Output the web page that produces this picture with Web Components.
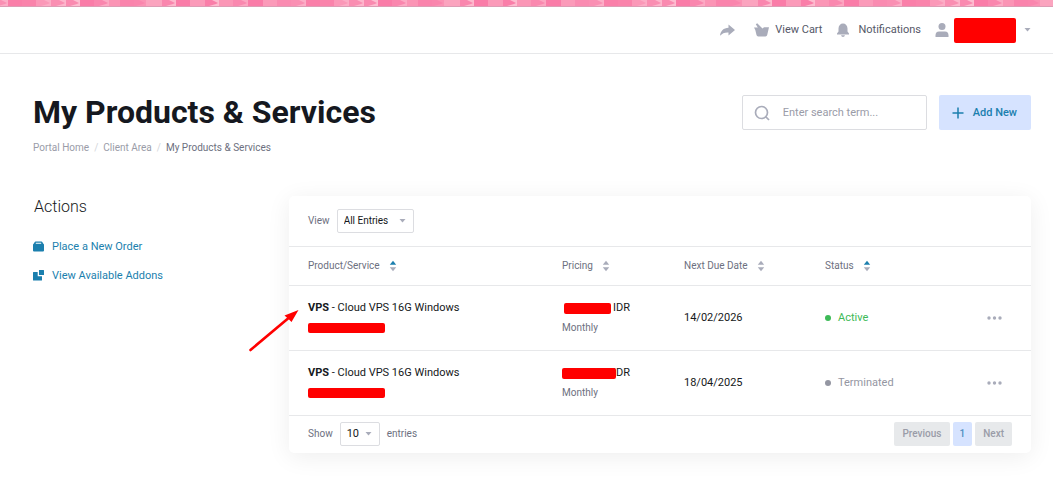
<!DOCTYPE html>
<html lang="en">
<head>
<meta charset="utf-8">
<title>My Products &amp; Services</title>
<style>
  body {
    margin: 0;
    background: #fff;
    color: #151820;
    font: 11px/20px Roboto, "Liberation Sans", sans-serif;
    --line: #e7e8ea;
    --muted: #6d7080;
    --icon: #a9acba;
    --accent: #1b7fae;
    --tint: #d6e3ff;
  }
</style>
</head>
<body>
<client-area></client-area>

<script>
class PatternStrip extends HTMLElement {
  constructor() {
    super();
    this.attachShadow({ mode: 'open' });
    this.render();
  }

  render() {
    // [start, shade, colour of the arrow tip at the right end]
    const tiles = [
      [0, '#fa7ca8'], [14, '#fa86ae', '#fcaac4'], [29, '#fb94b5'], [40, '#fa83ac'],
      [54, '#fa85ad', '#fb92b4'], [66, '#fba4bf'], [82, '#fa86ae', '#fdb9cd'],
      [96, '#fa7ca8'], [110, '#fb9ab9'], [125, '#fa7ea9', '#fdbccf'], [139, '#fb96b6'],
      [153, '#fa88af', '#fca6c1'], [168, '#fa7ca8'], [183, '#fb9ab9'], [197, '#fa8bb1'],
      [211, '#fa8fb3', '#fcaec7'], [226, '#fa7fa9'], [240, '#fa83ab'], [254, '#fb98b8', '#fcadc6'],
      [269, '#fa8eb2', '#fdb6cc'], [284, '#fa8ab0', '#fdbdd0'],
    ];
    const shapes = tiles.map(([x, shade, tip], i) => {
      const end = i + 1 < tiles.length ? tiles[i + 1][0] : 298;
      return `<path fill="${shade}" d="M${x} 0h${end - x}v6h-${end - x}z"/>`
        + (tip ? `<path fill="${tip}" d="M${end} 0v6h-10l7-2 2-1-6-3z"/>` : '');
    }).join('');
    this.shadowRoot.innerHTML = `
      <style>
        :host {
          display: block;
          height: 6px;
          background: #fa88ae;
          border-bottom: 1px solid #dc9db5;
        }
        svg {
          display: block;
          width: 100%;
          height: 6px;
        }
      </style>
      <svg aria-hidden="true">
        <defs><pattern id="tiles" x="80" width="298" height="6" patternUnits="userSpaceOnUse">${shapes}</pattern></defs>
        <rect width="100%" height="6" fill="url(#tiles)"/>
      </svg>
    `;
  }
}
customElements.define('pattern-strip', PatternStrip);

// Solid bar that hides private details
class RedactedBar extends HTMLElement {
  constructor() {
    super();
    this.attachShadow({ mode: 'open' });
    this.shadowRoot.innerHTML = `
      <style>
        :host {
          display: block;
          position: relative;
          flex: none;
          width: var(--bar-width, 77px);
          height: var(--bar-height, 10px);
          background: #f00;
          border-radius: 2px;
        }
      </style>
    `;
  }
}
customElements.define('redacted-bar', RedactedBar);

class SiteNav extends HTMLElement {
  constructor() {
    super();
    this.attachShadow({ mode: 'open' });
    this.render();
  }

  render() {
    this.shadowRoot.innerHTML = `
      <style>
        :host {
          display: flex;
          align-items: center;
          justify-content: flex-end;
          height: 46px;
          padding: 0 22px;
          border-bottom: 1px solid var(--line);
        }
        nav {
          display: flex;
          align-items: center;
          gap: 14px;
        }
        a, button {
          display: flex;
          align-items: center;
          gap: 6px;
          padding: 0;
          border: 0;
          background: none;
          color: #555868;
          font: inherit;
          text-decoration: none;
          cursor: pointer;
        }
        .share {
          margin-right: 5px;
        }
        .alerts {
          gap: 8px;
        }
        .account {
          gap: 5px;
          --bar-width: 62px;
          --bar-height: 25px;
        }
        .caret {
          margin-left: 3px;
        }
        svg {
          fill: var(--icon);
        }
      </style>
      <nav>
        <a class="share" href="#" aria-label="Share">
          <svg width="15" height="14" viewBox="0 0 15 14"><path d="M8.500 1.500L15 7l-6.500 5.500V9.500C5 9.200 2.200 10.300 0 12.800.5 8 3.500 5 8.500 4.800z"/></svg>
        </a>
        <a href="#">
          <svg width="15" height="14" viewBox="0 0 15 14"><path d="M0 4.500h3.800L1.800 1.200 3.200.3 8.500 5.500 10 4.200h5l-1.800 7.900q-.3 1.400-1.700 1.400H4.200q-1.400 0-1.700-1.400L1.300 7z"/></svg>
          View Cart
        </a>
        <a class="alerts" href="#">
          <svg width="14" height="14" viewBox="0 0 14 14"><path d="M1 11.500V10.500l1.500-2V5.500C2.500 2.500 4.500.5 7 .5s4.500 2 4.500 5v3l1.500 2v1zM5 12.300h4Q8.600 14 7 14T5 12.300z"/></svg>
          Notifications
        </a>
        <button class="account" type="button" aria-label="Account">
          <svg width="14" height="14" viewBox="0 0 14 14"><circle cx="7" cy="3.500" r="3.500"/><path d="M.5 14v-1.500Q.5 8.500 4 8.500h6q3.500 0 3.500 4V14z"/></svg>
          <redacted-bar></redacted-bar>
          <svg class="caret" width="7" height="4" viewBox="0 0 7 4"><path d="M.5 0h6l-3 3.500z"/></svg>
        </button>
      </nav>
    `;
  }
}
customElements.define('site-nav', SiteNav);

class PageHeader extends HTMLElement {
  constructor() {
    super();
    this.attachShadow({ mode: 'open' });
    this.render();
  }

  render() {
    this.shadowRoot.innerHTML = `
      <style>
        :host {
          display: flex;
          align-items: flex-start;
          justify-content: space-between;
          gap: 24px;
        }
        h1 {
          margin: 0;
          font-size: 32px;
          line-height: 34px;
          font-weight: 700;
        }
        ol {
          display: flex;
          margin: 9px 0 0;
          padding: 0;
          list-style: none;
          font-size: 10px;
          color: var(--muted);
        }
        li + li::before {
          content: "/";
          margin: 0 5px;
          color: #d3d5da;
        }
        li a {
          color: #9a9ca8;
          text-decoration: none;
        }
        .tools {
          display: flex;
          gap: 12px;
        }
        .search {
          display: flex;
          align-items: center;
          gap: 13px;
          box-sizing: border-box;
          width: 185px;
          height: 35px;
          padding: 0 11px;
          border: 1px solid #dcdde1;
          border-radius: 2px;
        }
        .search svg {
          flex: none;
          fill: none;
          stroke: var(--icon);
          stroke-width: 1.7;
        }
        input {
          min-width: 0;
          flex: 1;
          padding: 0;
          border: 0;
          outline: 0;
          background: none;
          font: inherit;
          color: inherit;
        }
        input::placeholder {
          color: #9a9ca8;
        }
        button {
          display: flex;
          align-items: center;
          gap: 8px;
          height: 35px;
          padding: 0 14px 0 13px;
          border: 0;
          border-radius: 2px;
          background: var(--tint);
          color: var(--accent);
          font: inherit;
          font-weight: 500;
        }
        button svg {
          stroke: currentColor;
          stroke-width: 1.5;
        }
      </style>
      <div>
        <h1>My Products &amp; Services</h1>
        <ol>
          <li><a href="#">Portal Home</a></li>
          <li><a href="#">Client Area</a></li>
          <li>My Products &amp; Services</li>
        </ol>
      </div>
      <div class="tools">
        <label class="search">
          <svg width="16" height="16" viewBox="0 0 16 16"><circle cx="7.500" cy="7.500" r="6"/><path d="M11.500 11.500l3.500 3.500"/></svg>
          <input type="search" placeholder="Enter search term..." aria-label="Search">
        </label>
        <button type="button">
          <svg width="13" height="12" viewBox="0 0 13 12"><path d="M6 .5v11M.5 6h11"/></svg>
          Add New
        </button>
      </div>
    `;
  }
}
customElements.define('page-header', PageHeader);

class SideActions extends HTMLElement {
  constructor() {
    super();
    this.attachShadow({ mode: 'open' });
    this.render();
  }

  render() {
    this.shadowRoot.innerHTML = `
      <style>
        :host {
          display: block;
          padding-top: 1px;
        }
        h2 {
          margin: 0 0 20px 1px;
          font-size: 16px;
          line-height: 20px;
          font-weight: 300;
        }
        ul {
          display: grid;
          gap: 9px;
          margin: 0;
          padding: 0;
          list-style: none;
        }
        a {
          display: flex;
          align-items: center;
          gap: 8px;
          color: var(--accent);
          text-decoration: none;
        }
        svg {
          fill: currentColor;
        }
      </style>
      <h2>Actions</h2>
      <ul>
        <li><a href="#">
          <svg width="11" height="12" viewBox="0 0 11 12"><path fill-rule="evenodd" d="M2.500.5h6q1 0 1.300 1.500L11 3.500V9.500q0 1-1 1H1q-1 0-1-1V3.500L1.200 2Q1.500.5 2.500.5zM2.800 1.800v1h5.400v-1z"/></svg>
          Place a New Order
        </a></li>
        <li><a href="#">
          <svg width="11" height="12" viewBox="0 0 11 12"><path d="M6 0h4.500q.5 0 .5.500V5H6zM.5 2H4.700v4.300H9V10q0 .5-.5.500H.5q-.5 0-.5-.5V2.500Q0 2 .5 2z"/></svg>
          View Available Addons
        </a></li>
      </ul>
    `;
  }
}
customElements.define('side-actions', SideActions);

class DropDown extends HTMLElement {
  constructor() {
    super();
    this.attachShadow({ mode: 'open' });
    this.render();
  }

  render() {
    const options = this.getAttribute('options').split(',');
    this.shadowRoot.innerHTML = `
      <style>
        :host {
          display: inline-block;
          font-size: 10px;
          color: var(--muted);
        }
        label {
          display: flex;
          align-items: center;
          gap: 7px;
        }
        .box {
          display: grid;
          align-items: center;
        }
        select, svg {
          grid-area: 1 / 1;
        }
        select {
          appearance: none;
          box-sizing: border-box;
          width: var(--select-width);
          height: 24px;
          padding: 0 6px;
          border: 1px solid #dcdde1;
          border-radius: 2px;
          background: #fff;
          font: inherit;
          font-size: var(--select-size, 10px);
          color: #151820;
        }
        svg {
          justify-self: end;
          margin-right: 8px;
          fill: var(--icon);
          pointer-events: none;
        }
      </style>
      <label>
        <span>${this.getAttribute('label')}</span>
        <span class="box">
          <select>${options.map((text) => `<option>${text}</option>`).join('')}</select>
          <svg width="7" height="4" viewBox="0 0 7 4"><path d="M.5 0h6l-3 3.500z"/></svg>
        </span>
        <slot></slot>
      </label>
    `;
  }
}
customElements.define('drop-down', DropDown);

class ProductTable extends HTMLElement {
  constructor() {
    super();
    this.attachShadow({ mode: 'open' });
    this.columns = [
      { label: 'Product/Service', sorted: true },
      { label: 'Pricing' },
      { label: 'Next Due Date' },
      { label: 'Status', sorted: true },
    ];
    this.rows = [
      { plan: 'Cloud VPS 16G Windows', due: '14/02/2026', status: 'Active', bar: '47px' },
      { plan: 'Cloud VPS 16G Windows', due: '18/04/2025', status: 'Terminated', bar: '54px' },
    ];
    this.render();
  }

  renderColumn(column) {
    return `
      <th scope="col"><button class="sort" type="button">${column.label}
        <svg width="8" height="12" viewBox="0 0 8 12">
          <path class="${column.sorted ? 'up' : ''}" d="M.8 4.700L4 .8l3.200 3.900z"/><path d="M.8 7.300h6.400L4 11.200z"/>
        </svg>
      </button></th>
    `;
  }

  renderRow(row) {
    return `
      <tr>
        <td><div><b>VPS</b> - ${row.plan}</div><div class="line"><redacted-bar></redacted-bar></div></td>
        <td>
          <div class="line">
            <span class="amount" style="--bar-width: ${row.bar}"><redacted-bar></redacted-bar></span>
            IDR
          </div>
          <div class="cycle">Monthly</div>
        </td>
        <td>${row.due}</td>
        <td><span class="status ${row.status.toLowerCase()}">${row.status}</span></td>
        <td><button class="menu" type="button" aria-label="More actions">
          <svg width="15" height="4" viewBox="0 0 15 4"><circle cx="2" cy="2" r="1.700"/><circle cx="7.500" cy="2" r="1.700"/><circle cx="13" cy="2" r="1.700"/></svg>
        </button></td>
      </tr>
    `;
  }

  render() {
    this.shadowRoot.innerHTML = `
      <style>
        :host {
          display: block;
          position: relative;
          border-radius: 5px;
          background: #fff;
          box-shadow: 0 4px 24px rgba(0, 0, 0, 0.07);
        }
        header {
          padding: 13px 19px;
          --select-width: 77px;
        }
        table {
          width: 100%;
          table-layout: fixed;
          border-collapse: separate;
          border-spacing: 0;
        }
        .price { width: 122px; }
        .due { width: 141px; }
        .state { width: 145px; }
        .more { width: 61px; }
        th, td {
          padding: 0;
          border-bottom: 1px solid var(--line);
          text-align: left;
        }
        th {
          height: 38px;
          border-top: 1px solid var(--line);
          font-weight: 400;
        }
        td {
          height: 64px;
        }
        th:first-child, td:first-child {
          padding-left: 19px;
        }
        button {
          padding: 0;
          border: 0;
          background: none;
          font: inherit;
          cursor: pointer;
        }
        .sort {
          display: flex;
          align-items: center;
          gap: 9px;
          font-size: 10px;
          color: var(--muted);
        }
        svg {
          fill: var(--icon);
        }
        .up {
          fill: var(--accent);
        }
        b {
          font-weight: 700;
        }
        .line {
          display: flex;
          align-items: center;
          height: 20px;
        }
        .amount {
          display: flex;
          justify-content: safe center;
          width: 51px;
          --bar-height: 11px;
        }
        .cycle {
          font-size: 10px;
          color: var(--muted);
        }
        .status {
          display: flex;
          align-items: center;
          gap: 7px;
        }
        .status::before {
          content: "";
          width: 6px;
          height: 6px;
          border-radius: 50%;
          background: currentColor;
        }
        .active { color: #3dba57; }
        .terminated { color: #9496a2; }
        .menu {
          display: block;
          margin-left: 17px;
        }
        .menu svg {
          display: block;
        }
        footer {
          display: flex;
          align-items: center;
          justify-content: space-between;
          padding: 6px 19px 7px;
          --select-width: 40px;
          --select-size: 11px;
        }
        .pages {
          display: flex;
          gap: 3px;
        }
        .pages button {
          height: 24px;
          padding: 0 8px;
          border-radius: 2px;
          background: #e7e9eb;
          color: #9a9ca8;
          font-size: 10px;
          font-weight: 500;
        }
        .pages .current {
          padding: 0 7px;
          background: var(--tint);
          color: #4f8fc0;
        }
        .pointer {
          position: absolute;
          left: -41px;
          top: 113px;
          fill: #f00;
          stroke: #f00;
        }
      </style>
      <header><drop-down label="View" options="All Entries,Active,Terminated"></drop-down></header>
      <table>
        <colgroup><col><col class="price"><col class="due"><col class="state"><col class="more"></colgroup>
        <thead><tr>${this.columns.map((column) => this.renderColumn(column)).join('')}<th></th></tr></thead>
        <tbody>${this.rows.map((row) => this.renderRow(row)).join('')}</tbody>
      </table>
      <footer>
        <drop-down label="Show" options="10,25,50">entries</drop-down>
        <div class="pages">
          <button type="button">Previous</button>
          <button class="current" type="button">1</button>
          <button type="button">Next</button>
        </div>
      </footer>
      <svg class="pointer" width="52" height="44" viewBox="0 0 52 44" aria-hidden="true">
        <path stroke-width="2.600" stroke-linecap="round" d="M2.500 41L40 9.500"/><path stroke="none" d="M50.500 1L43.500 13 41 10.500 36.500 6.500z"/>
      </svg>
    `;
  }
}
customElements.define('product-table', ProductTable);

class ClientArea extends HTMLElement {
  constructor() {
    super();
    this.attachShadow({ mode: 'open' });
    this.shadowRoot.innerHTML = `
      <style>
        :host {
          display: block;
        }
        main {
          padding: 41px 22px 31px 33px;
        }
        .columns {
          display: grid;
          grid-template-columns: 256px 1fr;
          align-items: start;
          margin-top: 38px;
        }
      </style>
      <pattern-strip></pattern-strip>
      <site-nav></site-nav>
      <main>
        <page-header></page-header>
        <div class="columns">
          <side-actions></side-actions>
          <product-table></product-table>
        </div>
      </main>
    `;
  }
}
customElements.define('client-area', ClientArea);
</script>
</body>
</html>
